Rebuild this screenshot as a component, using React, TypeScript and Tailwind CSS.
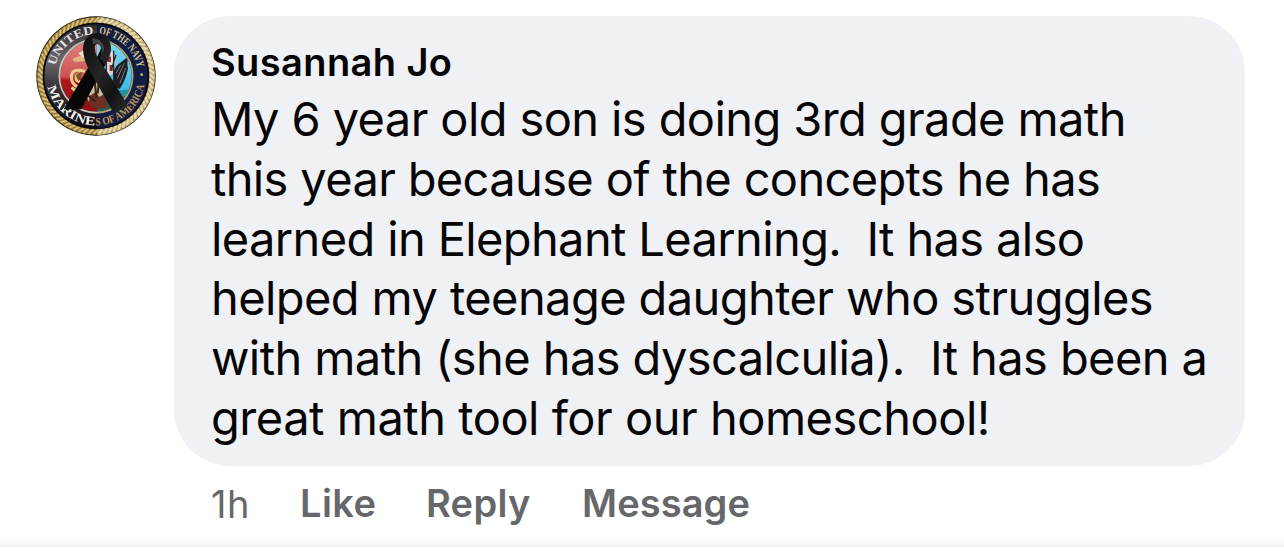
import { FC } from "react";

interface CommentLine {
  text: string;
  className: string;
}

const commentLines: CommentLine[] = [
  { text: "My 6 year old son is doing 3rd grade math", className: "tracking-[-0.6px]" },
  { text: "this year because of the concepts he has", className: "tracking-[-0.65px]" },
  { text: "learned in Elephant Learning.  It has also", className: "tracking-[-0.63px]" },
  { text: "helped my teenage daughter who struggles", className: "tracking-[-0.59px]" },
  { text: "with math (she has dyscalculia).  It has been a", className: "tracking-[-0.59px]" },
  { text: "great math tool for our homeschool!", className: "tracking-[-0.48px]" },
];

const strands = Array.from({ length: 72 }, (_, i) => i * 5);

const Avatar: FC = () => (
  <svg viewBox="18 18 360 360" className="size-[120px] shrink-0" role="img">
    <defs>
      <clipPath id="left">
        <rect x="18" y="18" width="183" height="360" />
      </clipPath>
      <clipPath id="right">
        <rect x="201" y="18" width="177" height="360" />
      </clipPath>
      <clipPath id="disc">
        <circle cx="198" cy="198" r="107" />
      </clipPath>
      <linearGradient id="steel" x1="0" y1="0" x2="0" y2="1">
        <stop offset="0" stopColor="#2c2a2b" />
        <stop offset="0.35" stopColor="#6b696e" />
        <stop offset="0.6" stopColor="#373337" />
        <stop offset="1" stopColor="#0d0b0e" />
      </linearGradient>
      <linearGradient id="red" x1="0" y1="0" x2="0" y2="1">
        <stop offset="0" stopColor="#dc8583" />
        <stop offset="0.5" stopColor="#cf5354" />
        <stop offset="0.56" stopColor="#ad1619" />
        <stop offset="1" stopColor="#8c1013" />
      </linearGradient>
      <linearGradient id="sky" x1="0" y1="0" x2="0" y2="1">
        <stop offset="0" stopColor="#86d9ee" />
        <stop offset="1" stopColor="#18aee0" />
      </linearGradient>
      <linearGradient id="strand" x1="0" y1="0" x2="1" y2="1">
        <stop offset="0" stopColor="#0c0c0c" />
        <stop offset="0.45" stopColor="#252525" />
        <stop offset="0.7" stopColor="#121212" />
        <stop offset="1" stopColor="#2a2a2a" />
      </linearGradient>
      <path id="arcTop" d="M72 198 A126 126 0 0 1 324 198" />
      <path id="arcBottom" d="M50 198 A148 148 0 0 0 346 198" />
    </defs>

    {/* rope */}
    <circle cx="198" cy="198" r="179" fill="#17130e" />
    <circle cx="198" cy="198" r="168" fill="none" stroke="#9a7a38" strokeWidth="17" clipPath="url(#left)" />
    <circle cx="198" cy="198" r="168" fill="none" stroke="#b39c68" strokeWidth="18" clipPath="url(#right)" />
    {strands.map((angle) => (
      <path
        key={angle}
        d="M192 37 Q203 28 205 23"
        fill="none"
        stroke={angle > 0 && angle < 180 ? "#e6d8a8" : "#d9bf74"}
        strokeWidth={angle > 0 && angle < 180 ? 8 : 6}
        transform={`rotate(${angle} 198 198)`}
      />
    ))}

    {/* lettered band */}
    <circle cx="198" cy="198" r="158" fill="url(#steel)" clipPath="url(#left)" />
    <circle cx="198" cy="198" r="158" fill="#111d43" clipPath="url(#right)" />
    <circle cx="198" cy="198" r="157" fill="none" stroke="#0b0b12" strokeWidth="5" />

    <g clipPath="url(#disc)">
      <rect x="88" y="88" width="113" height="220" fill="url(#red)" />
      <rect x="201" y="88" width="110" height="220" fill="url(#sky)" />
      <path d="M201 258 Q250 240 311 240 V310 H201Z" fill="#315b48" />
      <path d="M240 250 Q280 235 311 240 V254 Q270 260 250 270Z" fill="#2594a0" />
      {/* eagle, globe and anchor */}
      <path d="M128 148 Q140 136 165 137 L174 151 Q150 157 133 155Z" fill="#e3b582" />
      <path d="M145 130 l18 -10 9 14 -14 8Z" fill="#efe4cf" />
      <path d="M165 184 Q126 172 124 200 Q124 222 145 232 L137 243 L125 232 M151 190 Q135 194 139 210 L158 221" fill="none" stroke="#e8ce91" strokeWidth="9" />
      <path d="M137 197 q8 -12 19 -9 l-10 26Z" fill="#79551f" />
      <path d="M181 216 L205 190 L218 228 L224 270 L178 278 L165 250Z" fill="#c8bd9d" />
      <path d="M180 257 l18 -12 9 16 18 -10 8 42 -33 4 -25 -15Z" fill="#6b3024" />
      <path d="M194 209 l5 55 M207 210 l-4 40 M172 255 l25 20" stroke="#332419" strokeWidth="6" />
      {/* ship */}
      <path d="M230 125 H249 L258 150 L250 190 L232 202Z" fill="#ddd7d3" />
      <path d="M233 140 h10 v16 h-10z M239 165 h9 v18 h-9z" fill="#8e2d36" />
      <path d="M229 118 V215 M251 122 V200 M258 134 L244 180" stroke="#26272d" strokeWidth="4" />
      {/* wing */}
      <path d="M249 213 Q248 173 266 162 L296 139 Q289 158 294 175 Q288 210 269 237 L252 229Z" fill="#1e1e25" />
      <path d="M262 205 L283 159 M270 220 L287 174 M258 190 L272 165" stroke="#777a83" strokeWidth="3" />
    </g>
    <circle cx="198" cy="198" r="110" fill="none" stroke="#cbc5ba" strokeWidth="5" clipPath="url(#left)" />
    <circle cx="198" cy="198" r="110" fill="none" stroke="#b8a56d" strokeWidth="5" clipPath="url(#right)" />

    <g className="font-['Liberation_Serif',serif] font-bold">
      <text fontSize="36" fill="#e6e3e4" textLength="160" lengthAdjust="spacingAndGlyphs">
        <textPath href="#arcTop" startOffset="31">UNITED</textPath>
      </text>
      <text fontSize="34" fill="#dcc68e" textLength="164" lengthAdjust="spacingAndGlyphs">
        <textPath href="#arcTop" startOffset="207">OF THE NAVY</textPath>
      </text>
      <text fontSize="38" fill="#f3f1f1" textLength="196" lengthAdjust="spacingAndGlyphs">
        <textPath href="#arcBottom" startOffset="33">MARINE</textPath>
      </text>
      <text fontSize="34" fill="#bf9654" textLength="206" lengthAdjust="spacingAndGlyphs">
        <textPath href="#arcBottom" startOffset="231">S OF AMERICA</textPath>
      </text>
    </g>
    <circle cx="335" cy="194" r="4" fill="#d1b56f" />

    {/* ribbon */}
    <path d="M243 113 Q238 150 212 188 L154 298 L101 298 L176 171 Q206 145 216 105Z" fill="#060606" />
    <path d="M159 115 Q163 70 201 70 Q240 71 243 113 Q242 142 226 165 L208 144 Q221 118 208 104 Q196 98 194 112 Q195 138 217 165 Q240 194 294 289 Q272 304 247 302 Q217 248 183 190 Q159 151 159 115Z" fill="url(#strand)" />
    <path d="M186 86 Q219 83 223 120 L214 132 Q220 112 208 104 Q199 98 190 102Z" fill="#444" />
  </svg>
);

const App: FC = () => {
  return (
    <div className="flex h-[558px] w-[1284px] flex-col overflow-hidden bg-white font-[Inter,sans-serif]">
      <div className="flex h-[547px] flex-col bg-[linear-gradient(to_top,#f1f1f1_0px,#fafafa_5px,#ffffff_13px)] pt-4">
        <div className="flex gap-[18px] pl-9">
          <Avatar />
          <div className="w-[1071px]">
            <div className="h-[450px] rounded-[56px] bg-[#f0f1f5] pt-[21px] pl-[37px] text-[#050505]">
              <div className="h-[52px] text-[38px] leading-[50px] font-semibold tracking-[0.4px]">
                <span>Susannah Jo</span>
              </div>
              <div className="text-[47px] leading-[59.8px]">
                {commentLines.map((line) => (
                  <div key={line.text} className="whitespace-pre">
                    <span className={line.className}>{line.text}</span>
                  </div>
                ))}
              </div>
            </div>
            <div className="flex items-start pt-3 pl-[37px] text-[38px] leading-[50px] font-semibold text-[#65676b]">
              <span className="w-[89px] pt-px font-normal tracking-[0.5px]">1h</span>
              <button className="w-[126px] text-left tracking-[0.4px]">Like</button>
              <button className="w-[156px] text-left tracking-[0.3px]">Reply</button>
              <button className="text-left tracking-[0.1px]">Message</button>
            </div>
          </div>
        </div>
      </div>
    </div>
  );
};

export default App;
